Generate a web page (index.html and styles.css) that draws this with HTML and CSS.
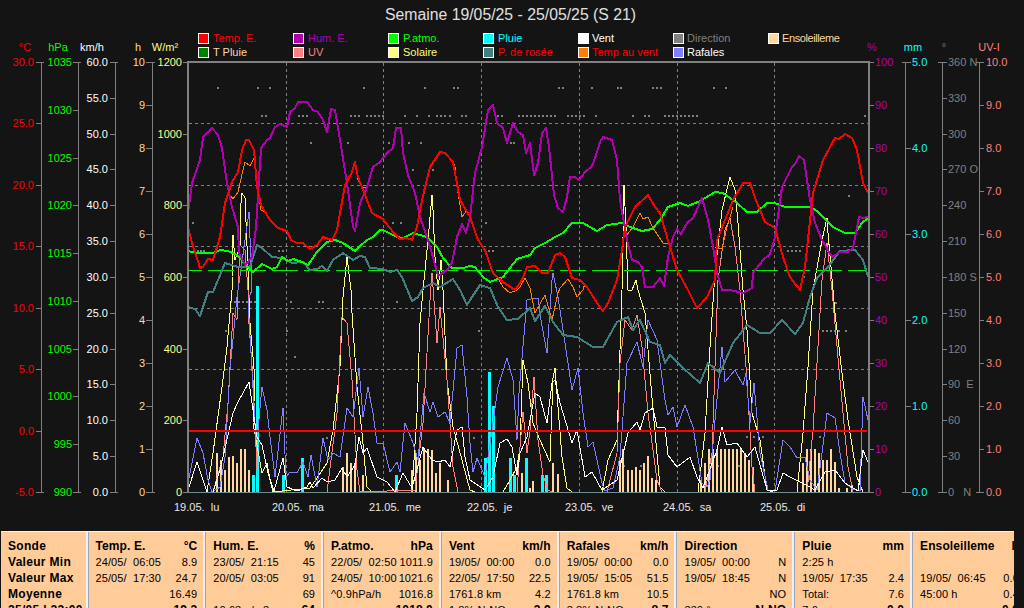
FILE: index.html
```html
<!DOCTYPE html>
<html lang="fr">
<head>
<meta charset="utf-8">
<title>Semaine 19/05/25 - 25/05/25 (S 21)</title>
<link rel="stylesheet" href="styles.css">
</head>
<body>
<svg class="chart" width="1024" height="531" viewBox="0 0 1024 531">
  <text class="title" x="510.5" y="20">Semaine 19/05/25 - 25/05/25 (S 21)</text>

  <!-- legend -->
  <g class="swatch">
    <rect x="198.500" y="33.500" width="10" height="10" fill="#ff0000"/>
    <rect x="198.500" y="47.500" width="10" height="10" fill="#008000"/>
    <rect x="293.500" y="33.500" width="10" height="10" fill="#b000b0"/>
    <rect x="293.500" y="47.500" width="10" height="10" fill="#ff8080"/>
    <rect x="388.500" y="33.500" width="10" height="10" fill="#00ff00"/>
    <rect x="388.500" y="47.500" width="10" height="10" fill="#ffff80"/>
    <rect x="483.500" y="33.500" width="10" height="10" fill="#00ffff"/>
    <rect x="483.500" y="47.500" width="10" height="10" fill="#408080"/>
    <rect x="578.500" y="33.500" width="10" height="10" fill="#ffffff"/>
    <rect x="578.500" y="47.500" width="10" height="10" fill="#ff8000"/>
    <rect x="673.500" y="33.500" width="10" height="10" fill="#808080"/>
    <rect x="673.500" y="47.500" width="10" height="10" fill="#8080ff"/>
    <rect x="768.500" y="33.500" width="10" height="10" fill="#ffd8a0"/>
  </g>
  <text class="lbl red" x="213" y="42">Temp. E.</text>
  <text class="lbl cream" x="213" y="56">T Pluie</text>
  <text class="lbl purple" x="308" y="42">Hum. E.</text>
  <text class="lbl pink" x="308" y="56">UV</text>
  <text class="lbl green" x="403" y="42">P.atmo.</text>
  <text class="lbl yellow" x="403" y="56">Solaire</text>
  <text class="lbl cyan" x="498" y="42">Pluie</text>
  <text class="lbl red" x="498" y="56">P. de rosée</text>
  <text class="lbl white" x="592" y="42">Vent</text>
  <text class="lbl red" x="592" y="56">Temp au vent</text>
  <text class="lbl gray" x="687" y="42">Direction</text>
  <text class="lbl white" x="687" y="56">Rafales</text>
  <text class="lbl cream tight" x="782" y="42">Ensoleilleme</text>

  <!-- unit captions -->
  <text class="lbl mid red" x="25" y="51">°C</text>
  <text class="lbl mid green" x="58" y="51">hPa</text>
  <text class="lbl mid white" x="92" y="51">km/h</text>
  <text class="lbl mid cream" x="138" y="51">h</text>
  <text class="lbl mid yellow" x="165" y="51">W/m²</text>
  <text class="lbl mid purple" x="872" y="51">%</text>
  <text class="lbl mid cyan" x="913" y="51">mm</text>
  <text class="lbl mid gray" x="944" y="51">°</text>
  <text class="lbl mid pink" x="989" y="51">UV-I</text>

  <!-- axes -->
  <g class="axis">
    <path d="M41 62V492M36 62H44M36 123H41M36 185H41M36 246H41M36 308H41M36 369H41M36 431H41M36 492H44"/>
    <path d="M78 62V492M73 62H81M73 110H78M73 158H78M73 205H78M73 253H78M73 301H78M73 349H78M73 396H78M73 444H78M73 492H81"/>
    <path d="M115 62V492M110 62H118M110 98H115M110 134H115M110 169H115M110 205H115M110 241H115M110 277H115M110 313H115M110 349H115M110 384H115M110 420H115M110 456H115M110 492H118"/>
    <path d="M152 62V492M146 62H155M146 105H152M146 148H152M146 191H152M146 234H152M146 277H152M146 320H152M146 363H152M146 406H152M146 449H152M146 492H155"/>
    <path d="M183 62H188M183 134H188M183 205H188M183 277H188M183 349H188M183 420H188M183 492H188"/>
    <path d="M869 62H874M869 105H874M869 148H874M869 191H874M869 234H874M869 277H874M869 320H874M869 363H874M869 406H874M869 449H874M869 492H874"/>
    <path d="M905.500 62V492M902 62H911M905 148H911M905 234H911M905 320H911M905 406H911M902 492H911"/>
    <path d="M942 62V492M938 62H947M942 98H947M942 134H947M942 169H947M942 205H947M942 241H947M942 277H947M942 313H947M942 349H947M942 384H947M942 420H947M942 456H947M938 492H947"/>
    <path d="M979 62V492M976 62H984M979 105H984M979 148H984M979 191H984M979 234H984M979 277H984M979 320H984M979 363H984M979 406H984M979 449H984M976 492H984"/>
  </g>

  <g class="lbl end red">
    <text x="34" y="66">30.0</text><text x="34" y="127">25.0</text><text x="34" y="189">20.0</text><text x="34" y="250">15.0</text><text x="34" y="312">10.0</text><text x="34" y="373">5.0</text><text x="34" y="435">0.0</text><text x="34" y="496">-5.0</text>
  </g>
  <g class="lbl end green">
    <text x="72" y="66">1035</text><text x="72" y="114">1030</text><text x="72" y="162">1025</text><text x="72" y="209">1020</text><text x="72" y="257">1015</text><text x="72" y="305">1010</text><text x="72" y="353">1005</text><text x="72" y="400">1000</text><text x="72" y="448">995</text><text x="72" y="496">990</text>
  </g>
  <g class="lbl end white">
    <text x="108" y="66">60.0</text><text x="108" y="102">55.0</text><text x="108" y="138">50.0</text><text x="108" y="173">45.0</text><text x="108" y="209">40.0</text><text x="108" y="245">35.0</text><text x="108" y="281">30.0</text><text x="108" y="317">25.0</text><text x="108" y="353">20.0</text><text x="108" y="388">15.0</text><text x="108" y="424">10.0</text><text x="108" y="460">5.0</text><text x="108" y="496">0.0</text>
  </g>
  <g class="lbl end cream">
    <text x="145" y="66">10</text><text x="145" y="109">9</text><text x="145" y="152">8</text><text x="145" y="195">7</text><text x="145" y="238">6</text><text x="145" y="281">5</text><text x="145" y="324">4</text><text x="145" y="367">3</text><text x="145" y="410">2</text><text x="145" y="453">1</text><text x="145" y="496">0</text>
  </g>
  <g class="lbl end yellow">
    <text x="182" y="66">1200</text><text x="182" y="138">1000</text><text x="182" y="209">800</text><text x="182" y="281">600</text><text x="182" y="353">400</text><text x="182" y="424">200</text><text x="182" y="496">0</text>
  </g>
  <g class="lbl purple">
    <text x="875" y="66">100</text><text x="875" y="109">90</text><text x="875" y="152">80</text><text x="875" y="195">70</text><text x="875" y="238">60</text><text x="875" y="281">50</text><text x="875" y="324">40</text><text x="875" y="367">30</text><text x="875" y="410">20</text><text x="875" y="453">10</text><text x="875" y="496">0</text>
  </g>
  <g class="lbl cyan">
    <text x="912" y="66">5.0</text><text x="912" y="152">4.0</text><text x="912" y="238">3.0</text><text x="912" y="324">2.0</text><text x="912" y="410">1.0</text><text x="912" y="496">0.0</text>
  </g>
  <g class="lbl gray">
    <text x="948" y="66">360 N</text><text x="948" y="102">330</text><text x="948" y="138">300</text><text x="948" y="173">270 O</text><text x="948" y="209">240</text><text x="948" y="245">210</text><text x="948" y="281">180 S</text><text x="948" y="317">150</text><text x="948" y="353">120</text><text x="948" y="388">90  E</text><text x="948" y="424">60</text><text x="948" y="460">30</text><text x="948" y="496">0   N</text>
  </g>
  <g class="lbl pink">
    <text x="986" y="66">10.0</text><text x="986" y="109">9.0</text><text x="986" y="152">8.0</text><text x="986" y="195">7.0</text><text x="986" y="238">6.0</text><text x="986" y="281">5.0</text><text x="986" y="324">4.0</text><text x="986" y="367">3.0</text><text x="986" y="410">2.0</text><text x="986" y="453">1.0</text><text x="986" y="496">0.0</text>
  </g>

  <!-- grid -->
  <path class="grid" d="M286.500 63V492M383.500 63V492M481.500 63V492M579.500 63V492M677.500 63V492M774.500 63V492M189 123.500H868M189 185.500H868M189 246.500H868M189 308.500H868M189 369.500H868"/>

  <!-- direction samples -->
  <path class="dots" d="M217 88h2M257 88h2M269 88h2M363 88h2M424 88h2M453 88h2M457 88h2M558 88h2M562 88h2M591 88h2M617 88h2M620 88h2M652 88h2M656 88h2M660 88h2M713 88h2M725 88h2
  M261 116h2M265 116h2M298 116h2M302 116h2M306 116h2M350 116h2M354 116h2M358 116h2M366 116h2M370 116h2M374 116h2M378 116h2M382 116h2M404 116h2M416 116h2M428 116h2M436 116h2M440 116h2M444 116h2M449 116h2M461 116h2M465 116h2M497 116h2M501 116h2M518 116h2M522 116h2M526 116h2M530 116h2M534 116h2M538 116h2M542 116h2M546 116h2M550 116h2M554 116h2M567 116h2M571 116h2M575 116h2M579 116h2M583 116h2M595 116h2M632 116h2M644 116h2M648 116h2M664 116h2M668 116h2M672 116h2M676 116h2M680 116h2M684 116h2M688 116h2M692 116h2M696 116h2M864 116h2
  M310 143h2M347 143h2M388 143h2M408 143h2M420 143h2M510 143h2M513 143h2M599 143h2
  M412 170h2M432 170h2M778 195h2M848 196h2
  M192 223h2M221 223h2M392 223h2M400 223h2M485 223h2
  M197 251h2M200 251h2M203 251h2M278 251h2M282 251h2M488 251h2M492 251h2M787 251h2M791 251h2M795 251h2M799 251h2M803 277h2
  M230 302h2M234 302h2M238 302h2M242 302h2M246 302h2M250 302h2M254 302h2M290 302h2M318 302h2M322 302h2M396 302h2M478 331h2M835 303h2
  M225 331h2M286 331h2M822 331h2M826 331h2M830 331h2M834 331h2M838 331h2M845 331h2M294 357h2
  M326 438h2M473 438h2M746 437h2M753 437h2M762 437h2M819 437h2M623 466h2M640 466h2M717 466h2M738 466h2"/>

  <!-- sunshine and rain bars -->
  <path class="sun" d="M217 453V492M221 460V492M225 470V492M229 457V492M233 456V492M237 463V492M241 449V492M245 449V492M249 470V492
  M343 467V492M347 453V492M351 463V492M355 463V492M363 475V492
  M412 470V492M416 453V492M420 460V492M424 449V492M428 449V492M432 450V492M436 473V492M440 463V492M448 480V492
  M522 473V492M530 488V492M533 481V492M553 463V492M558 474V492
  M620 460V492M623 449V492M628 470V492M632 470V492M636 467V492M640 470V492M644 463V492M648 456V492M652 478V492M656 480V492
  M701 480V492M705 463V492M709 449V492M713 449V492M717 449V492M721 449V492M725 449V492M729 449V492M733 449V492M737 449V492M741 449V492M745 453V492M749 460V492M753 467V492
  M803 463V492M807 449V492M811 449V492M815 449V492M819 453V492M823 460V492M827 460V492M831 449V492M835 462V492M839 488V492M847 488V492M852 485V492"/>
  <path class="rain" d="M253 475V492M257 286V492M283 475V492M302.500 458V492M396 475V492M485.500 458V492M489 372V492M493 406V492M510 458V492M514 475V492M526.500 458V492M542 475V492M546 475V492"/>

  <!-- thin series -->
  <polyline class="thin c-yellow" points="207,492 213,453 222,387 227,347 232,290 232,277 233,235 235,260 240,247 241,203 242,193 245,198 248,270 250,323 255,380 253,423 262,473 267,463 270,480 273,492 310,488 317,478 327,463 333,430 340,367 343,297 347,257 351,290 352,313 357,387 362,433 367,487 372,492 412,492 417,413 420,323 423,290 428,240 432,195 433,210 435,257 438,290 441,260 443,290 447,380 453,427 462,460 470,490 475,492 503,492 510,480 517,467 520,447 523,360 528,383 533,423 540,440 550,462 553,378 555,368 558,407 562,457 567,488 572,492 602,492 608,460 617,440 619,380 622,290 624,185 626,227 628,290 632,290 636,280 638,290 645,313 653,410 660,487 665,492 698,492 705,433 710,347 715,273 722,210 730,177 735,190 738,223 743,290 747,330 752,413 760,440 767,490 773,492 797,492 803,433 808,367 813,290 822,240 827,218 828,233 833,290 835,313 842,373 848,420 857,477 863,492"/>
  <polyline class="thin c-pink" points="213,492 223,457 228,403 233,313 237,320 238,290 240,245 245,250 248,290 248,310 253,380 256,447 258,492 327,492 337,413 342,317 347,323 352,380 357,470 360,492 415,490 423,423 430,300 432,273 437,343 440,307 447,380 453,467 458,492 517,492 520,447 523,412 527,453 530,430 534,377 538,440 543,475 548,490 552,492 607,492 617,453 620,363 625,320 632,330 637,315 642,347 648,413 657,480 662,492 705,492 712,453 718,280 725,230 730,218 735,247 740,290 747,380 752,467 755,492 807,492 813,430 822,280 827,243 832,290 840,380 848,467 853,492"/>
  <polyline class="thin c-blue" points="188,483 197,438 203,453 208,480 212,492 220,487 225,457 230,370 237,297 238,290 249,212 252,290 248,300 255,423 257,440 262,387 267,410 270,437 275,477 283,408 286,477 290,472 297,473 303,462 308,477 311,455 317,487 323,438 328,460 333,453 340,457 347,408 353,417 359,368 363,417 368,387 373,413 377,443 383,443 390,472 397,462 400,472 405,423 413,443 418,460 424,393 430,412 433,402 438,417 445,412 450,423 457,348 462,345 467,397 470,443 473,472 477,458 485,477 492,430 498,387 507,358 513,380 517,440 519,393 527,300 535,298 538,298 541,320 547,353 552,280 553,273 558,297 565,343 572,390 578,368 583,413 588,447 593,442 602,483 605,491 613,488 620,457 627,363 637,342 643,367 648,320 657,340 665,400 668,415 673,407 677,427 685,405 693,427 702,483 707,487 710,480 715,420 722,347 725,382 735,370 743,385 746,373 750,423 754,383 760,453 768,490 775,491 783,440 790,447 797,458 805,457 810,480 817,490 822,453 827,413 835,418 840,453 845,483 853,489 860,491 863,397 868,420"/>
  <polyline class="thin c-white" points="188,490 197,462 207,492 213,492 220,470 228,435 233,413 238,402 243,393 249,382 253,410 257,437 262,445 268,473 274,491 283,458 287,487 297,491 307,487 310,482 313,488 322,478 327,482 335,480 342,468 347,477 355,465 359,437 363,453 367,448 377,477 387,482 395,492 403,473 412,488 423,447 432,460 438,462 445,460 450,467 457,430 462,427 465,457 470,480 485,490 493,477 500,443 507,439 512,447 517,475 520,453 527,437 535,393 540,397 547,423 552,383 555,380 560,403 572,443 577,430 585,477 592,472 602,490 617,480 628,433 637,422 640,430 645,413 653,408 657,427 665,428 668,455 677,467 690,457 697,477 703,488 717,450 722,427 727,445 737,443 747,457 755,447 767,490 777,490 783,473 790,477 798,481 810,487 815,490 825,472 835,470 845,483 858,491 863,450 868,462"/>
  <polyline class="thin c-orange" points="225,203 228,192 233,199 238,192 243,170 245,162 250,166 254,158 257,187 261,210 265,212"/>
  <polyline class="thin c-orange" points="355,162 358,180 362,187 367,188"/>
  <polyline class="thin c-orange" points="453,162 455,167 458,193 462,217 467,210"/>
  <polyline class="thin c-orange" points="493,273 498,278 503,287 510,293 517,290 520,287 525,278 530,288 535,313 545,295 552,320 558,293 560,288 568,279 573,287 577,297 583,290 585,283"/>
  <polyline class="thin c-orange" points="627,235 633,227 640,213 643,219 648,217 653,228 663,243 668,244"/>
  <polyline class="thin c-orange" points="715,247 722,249 727,227 733,207"/>
  <polyline class="thin c-orange" points="863,183 868,192"/>

  <!-- limits -->
  <path class="limit-green" d="M189 270.500H867"/>
  <path class="limit-red" d="M189 431H867"/>

  <!-- thick series -->
  <polyline class="thick c-teal" points="188,307 195,309 200,316 208,292 213,292 218,280 225,263 238,267 250,267 257,245 262,248 272,257 282,258 292,263 303,262 310,270 317,269 322,266 327,271 333,260 343,253 353,260 360,256 365,257 370,268 383,269 390,272 397,270 402,277 412,301 418,297 423,288 433,283 440,287 453,279 460,290 467,305 472,297 480,285 490,288 498,307 507,320 518,319 530,308 535,321 545,306 553,322 563,335 577,337 593,347 603,347 617,322 628,317 633,330 640,320 650,342 660,345 665,363 670,355 683,368 700,383 708,363 720,373 733,343 747,325 760,333 770,333 782,320 795,334 803,323 810,297 817,278 828,267 840,251 855,250 863,260 868,277"/>
  <polyline class="thick c-green" points="188,251 197,253 213,253 220,250 228,251 237,255 247,266 253,272 262,264 272,269 277,267 282,257 288,261 293,259 302,262 308,265 317,252 327,242 335,240 343,243 355,251 360,246 367,240 373,237 380,230 383,230 397,237 403,238 413,233 427,237 437,247 443,258 452,268 463,268 470,266 475,267 483,277 490,282 503,277 510,268 517,259 530,255 535,248 545,243 555,237 563,233 572,223 583,223 597,231 607,225 622,223 630,227 642,231 652,229 660,220 668,207 680,203 688,206 700,201 715,192 723,193 737,203 747,212 757,212 767,203 775,203 785,207 810,207 817,211 833,227 845,233 855,233 862,223 868,218"/>
  <polyline class="thick c-purple" points="188,213 192,183 200,160 203,137 212,128 218,135 222,148 227,183 232,207 238,227 239,253 245,265 252,257 256,227 261,148 267,140 270,138 275,127 280,124 287,127 290,112 295,108 298,102 307,102 313,110 318,112 323,120 327,132 331,109 335,110 340,140 347,183 353,227 355,231 360,203 367,187 373,167 380,162 387,153 393,148 396,128 401,128 403,153 408,175 415,193 420,217 427,237 433,257 438,276 447,270 452,263 457,237 462,224 466,233 470,217 475,173 482,147 488,110 493,105 497,123 503,128 507,143 513,123 518,132 523,135 526,153 530,143 534,175 538,163 542,133 546,128 549,147 554,195 558,208 563,212 567,197 570,177 575,177 579,180 585,172 592,166 595,158 600,142 603,137 612,140 617,160 620,200 627,240 632,260 638,262 642,267 645,287 653,287 660,278 664,286 668,257 673,237 677,229 681,234 687,223 693,218 702,198 708,220 713,247 717,273 722,290 730,290 743,293 752,288 753,273 763,260 770,254 775,237 782,187 792,167 795,164 799,156 804,160 810,200 815,223 822,240 832,257 840,252 848,252 853,248 859,217 863,218 868,217"/>
  <polyline class="thick c-red" points="188,227 192,243 200,268 203,267 208,259 213,260 220,237 225,203 232,182 238,172 242,150 246,140 249,140 254,150 257,187 261,205 270,220 278,228 287,231 291,240 297,243 303,243 310,249 317,245 323,237 332,240 337,230 345,185 352,172 355,162 358,177 367,200 372,213 383,219 393,232 400,239 407,238 412,240 417,227 422,200 430,167 440,152 445,153 453,162 460,200 470,217 478,240 485,250 493,273 503,282 515,290 522,280 527,267 535,266 542,273 548,273 555,255 560,253 565,257 572,278 580,280 587,287 597,303 603,311 608,303 617,280 622,250 625,227 635,207 648,195 655,207 660,213 667,237 677,270 688,290 697,308 707,297 715,280 717,240 733,200 743,183 750,183 757,203 765,222 775,228 783,257 790,277 800,290 805,267 813,193 823,160 835,138 839,139 845,134 852,138 857,150 863,183 868,193"/>

  <!-- frame -->
  <path class="frame" d="M188 493V62H869V493"/>
  <path class="floor" d="M189 492.500H868"/>

  <g class="lbl date">
    <text x="174" y="511">19.05.  lu</text><text x="272" y="511">20.05.  ma</text><text x="369" y="511">21.05.  me</text><text x="467" y="511">22.05.  je</text><text x="565" y="511">23.05.  ve</text><text x="663" y="511">24.05.  sa</text><text x="760" y="511">25.05.  di</text>
  </g>
</svg>

<div class="stats">
  <div class="col first">
    <div class="row head"><span>Sonde</span></div>
    <div class="row head"><span>Valeur Min</span></div>
    <div class="row head"><span>Valeur Max</span></div>
    <div class="row head"><span>Moyenne</span></div>
    <div class="row head"><span>25/05 | 22:00</span></div>
  </div>
  <div class="col">
    <div class="row head"><span>Temp. E.</span><span>°C</span></div>
    <div class="row"><span class="pre">24/05/  06:05</span><span>8.9</span></div>
    <div class="row"><span class="pre">25/05/  17:30</span><span>24.7</span></div>
    <div class="row"><span></span><span>16.49</span></div>
    <div class="row"><span></span><b>19.3</b></div>
  </div>
  <div class="col">
    <div class="row head"><span>Hum. E.</span><span>%</span></div>
    <div class="row"><span class="pre">23/05/  21:15</span><span>45</span></div>
    <div class="row"><span class="pre">20/05/  03:05</span><span>91</span></div>
    <div class="row"><span></span><span>69</span></div>
    <div class="row"><span>10.63 g/m3</span><b>64</b></div>
  </div>
  <div class="col">
    <div class="row head"><span>P.atmo.</span><span>hPa</span></div>
    <div class="row"><span class="pre">22/05/  02:50</span><span>1011.9</span></div>
    <div class="row"><span class="pre">24/05/  10:00</span><span>1021.6</span></div>
    <div class="row"><span>^0.9hPa/h</span><span>1016.8</span></div>
    <div class="row"><span></span><b>1018.0</b></div>
  </div>
  <div class="col">
    <div class="row head"><span>Vent</span><span>km/h</span></div>
    <div class="row"><span class="pre">19/05/  00:00</span><span>0.0</span></div>
    <div class="row"><span class="pre">22/05/  17:50</span><span>22.5</span></div>
    <div class="row"><span>1761.8 km</span><span>4.2</span></div>
    <div class="row"><span>1.8% N-NO</span><b>3.9</b></div>
  </div>
  <div class="col">
    <div class="row head"><span>Rafales</span><span>km/h</span></div>
    <div class="row"><span class="pre">19/05/  00:00</span><span>0.0</span></div>
    <div class="row"><span class="pre">19/05/  15:05</span><span>51.5</span></div>
    <div class="row"><span>1761.8 km</span><span>10.5</span></div>
    <div class="row"><span>3.8% N-NO</span><b>8.7</b></div>
  </div>
  <div class="col">
    <div class="row head"><span>Direction</span></div>
    <div class="row"><span class="pre">19/05/  00:00</span><span>N</span></div>
    <div class="row"><span class="pre">19/05/  18:45</span><span>N</span></div>
    <div class="row"><span></span><span>NO</span></div>
    <div class="row"><span>339 °</span><b>N-NO</b></div>
  </div>
  <div class="col">
    <div class="row head"><span>Pluie</span><span>mm</span></div>
    <div class="row"><span>2:25 h</span></div>
    <div class="row"><span class="pre">19/05/  17:35</span><span>2.4</span></div>
    <div class="row"><span>Total:</span><span>7.6</span></div>
    <div class="row"><span>7.6</span><b>0.0</b></div>
  </div>
  <div class="col">
    <div class="row head"><span>Ensoleilleme</span><span>h</span></div>
    <div class="row"></div>
    <div class="row"><span class="pre">19/05/  06:45</span><span>0.0</span></div>
    <div class="row"><span>45:00 h</span><span>0.4</span></div>
    <div class="row"><span></span><b>0.0</b></div>
  </div>
</div>
</body>
</html>
```
FILE: styles.css
```css
html, body {
  margin: 0;
  padding: 0;
  background: #141414;
  height: 608px;
  overflow: hidden;
}

.chart {
  display: block;
}

.chart text {
  font-family: "Liberation Sans", Arial, sans-serif;
  white-space: pre;
}

.title {
  font-size: 15.800px;
  fill: #e0e0e0;
  text-anchor: middle;
}

.lbl {
  font-size: 11px;
}

.tight {
  letter-spacing: -0.4px;
}

.mid { text-anchor: middle; }
.end { text-anchor: end; }

.red { fill: #ff0000; }
.green { fill: #00ff00; }
.white { fill: #ffffff; }
.cream { fill: #ffd8a0; }
.yellow { fill: #ffff80; }
.purple { fill: #b000b0; }
.cyan { fill: #00ffff; }
.gray { fill: #808080; }
.pink { fill: #ff8080; }
.date { fill: #e8e8e8; }

.swatch rect {
  stroke: #ffffff;
  stroke-width: 1;
  shape-rendering: crispEdges;
}

.axis path {
  fill: none;
  stroke: #808080;
  stroke-width: 1;
  shape-rendering: crispEdges;
}

.grid {
  fill: none;
  stroke: #808080;
  stroke-width: 1;
  stroke-dasharray: 3 3;
  shape-rendering: crispEdges;
}

.dots {
  fill: none;
  stroke: #808080;
  stroke-width: 2;
  shape-rendering: crispEdges;
}

.sun {
  fill: none;
  stroke: #ffd8a0;
  stroke-width: 2;
  shape-rendering: crispEdges;
}

.rain {
  fill: none;
  stroke: #00ffff;
  stroke-width: 3;
  shape-rendering: crispEdges;
}

.thin, .thick {
  fill: none;
  stroke-linejoin: round;
  shape-rendering: crispEdges;
}

.thin {
  stroke-width: 1;
}

.thick {
  stroke-width: 2;
}

.c-yellow { stroke: #ffff80; }
.c-pink { stroke: #ff8080; }
.c-blue { stroke: #8080ff; }
.c-white { stroke: #ffffff; }
.c-orange { stroke: #ff8000; }
.c-teal { stroke: #408080; }
.c-green { stroke: #00ff00; }
.c-purple { stroke: #b000b0; }
.c-red { stroke: #ff0000; }

.limit-green {
  fill: none;
  stroke: #00f000;
  stroke-width: 1;
  stroke-dasharray: 26 6;
  stroke-dashoffset: 13;
  shape-rendering: crispEdges;
}

.limit-red {
  fill: none;
  stroke: #ff0000;
  stroke-width: 2;
  shape-rendering: crispEdges;
}

.frame {
  fill: none;
  stroke: #808080;
  stroke-width: 2;
  shape-rendering: crispEdges;
}

.floor {
  fill: none;
  stroke: #6f8f8f;
  stroke-width: 1;
  shape-rendering: crispEdges;
}

.stats {
  display: flex;
  margin-left: 1px;
  width: 1013px;
  height: 77px;
  overflow: hidden;
  background: #ffcc99;
  border-top: 1px solid #f4f4f4;
  font: 11px "Liberation Sans", Arial, sans-serif;
  letter-spacing: 0.1px;
  color: #000000;
}

.col {
  flex: 0 0 117.800px;
  min-width: 0;
  box-sizing: border-box;
  padding: 6px 8px 0 7px;
  border-right: 1px solid #9aa6b8;
  box-shadow: inset -2px 0 0 #f0f0f0;
}

.col.first {
  flex-basis: 87.500px;
  padding-right: 0;
}

.col:last-child {
  padding-right: 12px;
  border-right: 0;
  box-shadow: none;
}

.row {
  display: flex;
  justify-content: space-between;
  height: 16px;
  line-height: 16px;
  white-space: nowrap;
}

.row b,
.head {
  font-size: 12px;
  font-weight: 700;
}

.first .head {
  letter-spacing: 0.3px;
}

.pre {
  white-space: pre;
}
```
